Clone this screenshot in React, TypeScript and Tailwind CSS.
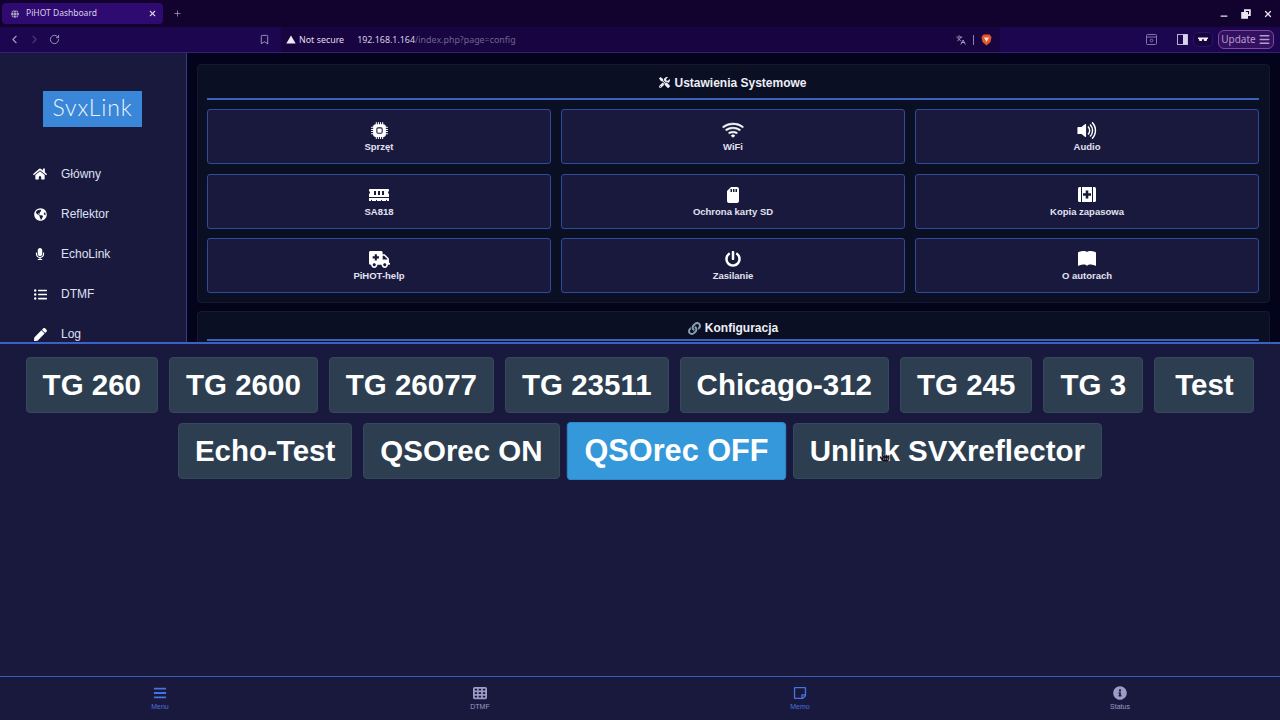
import type { ReactNode } from 'react';
import {
  FaHome,
  FaGlobeAmericas,
  FaMicrophone,
  FaListUl,
  FaPen,
  FaMemory,
  FaSdCard,
  FaAmbulance,
  FaPowerOff,
  FaTools,
  FaLink,
  FaBars,
  FaRegStickyNote,
  FaInfoCircle,
  FaGlobe,
  FaHandPointer,
} from 'react-icons/fa';
import { FaTableCells } from 'react-icons/fa6';
import { BsCpuFill, BsWifi, BsVolumeUpFill, BsBookFill } from 'react-icons/bs';
import { ChevronLeft, ChevronRight, RotateCw, Bookmark, Languages, X, Plus, Minus, Menu as MenuIcon } from 'lucide-react';

const navItems = [
  { label: 'Główny', icon: <FaHome size={14} /> },
  { label: 'Reflektor', icon: <FaGlobeAmericas size={13} /> },
  { label: 'EchoLink', icon: <FaMicrophone size={12} /> },
  { label: 'DTMF', icon: <FaListUl size={13} /> },
  { label: 'Log', icon: <FaPen size={13} /> },
];

// medkit without the handle, the FA one doesn't match
function BackupIcon() {
  return (
    <svg width="18" height="15" viewBox="0 0 18 15">
      <rect x="0" y="0" width="18" height="15" rx="1.5" fill="currentColor" />
      <rect x="3" y="0" width="1" height="15" fill="#19193e" />
      <rect x="14" y="0" width="1" height="15" fill="#19193e" />
      <path d="M7.7 3.5h2.6v2.7H13v2.6h-2.7v2.7H7.7V8.8H5V6.2h2.7Z" fill="#19193e" />
    </svg>
  );
}

const settings = [
  { label: 'Sprzęt', icon: <BsCpuFill size={17} /> },
  { label: 'WiFi', icon: <BsWifi size={22} className="stroke-current stroke-[0.5px]" /> },
  { label: 'Audio', icon: <BsVolumeUpFill size={23} /> },
  { label: 'SA818', icon: <FaMemory size={20} /> },
  { label: 'Ochrona karty SD', icon: <FaSdCard size={16} /> },
  { label: 'Kopia zapasowa', icon: <BackupIcon /> },
  { label: 'PiHOT-help', icon: <FaAmbulance size={21} /> },
  { label: 'Zasilanie', icon: <FaPowerOff size={16} /> },
  { label: 'O autorach', icon: <BsBookFill size={18} /> },
];

const firstRow = ['TG 260', 'TG 2600', 'TG 26077', 'TG 23511', 'Chicago-312', 'TG 245', 'TG 3', 'Test'];

function MacroButton({ children, active, cursor }: { children: ReactNode; active?: boolean; cursor?: boolean }) {
  return (
    <button
      className={
        active
          ? 'relative h-[56px] min-w-[100px] px-[16px] rounded-[4px] border border-[#2f86c4] bg-[#3498db] scale-[1.04] text-white text-[29.5px] font-bold whitespace-nowrap'
          : 'relative h-[56px] min-w-[100px] px-[16px] rounded-[4px] border border-[#34495e] bg-[#2c3e50] text-white text-[29.5px] font-bold whitespace-nowrap'
      }
    >
      {children}
      {cursor && (
        <FaHandPointer size={11} className="absolute left-[85px] top-[27px] text-[#10101c] stroke-[#8a93a0] stroke-[20px]" />
      )}
    </button>
  );
}

function BottomTab({ label, icon, active }: { label: string; icon: ReactNode; active?: boolean }) {
  return (
    <div className={active ? 'flex flex-col items-center justify-center gap-[2px] text-[#4a72dc]' : 'flex flex-col items-center justify-center gap-[2px] text-[#9c9cc6]'}>
      {icon}
      <span className="text-[7px] leading-[9px]">{label}</span>
    </div>
  );
}

export default function App() {
  return (
    <div className="w-[1280px] h-[720px] overflow-hidden flex flex-col bg-[#19193e] font-['Liberation_Sans',sans-serif]">
      {/* browser tab strip */}
      <div className="h-[27px] shrink-0 bg-[#12022e] flex items-center pl-[2px] pr-[7px] font-['Noto_Sans',sans-serif] text-[#d9d2ea]">
        <div className="w-[161px] h-[21px] rounded-[4px] bg-[#2f0a70] flex items-center pl-[9px] pr-[6px] text-[8.5px]">
          <FaGlobe size={8} className="text-[#a9a3c0] mr-[7px]" />
          <span className="flex-1">PiHOT Dashboard</span>
          <X size={9} strokeWidth={3} />
        </div>
        <Plus size={9} className="ml-[10px] text-[#a59dc2]" />
        <div className="ml-auto flex items-center gap-[12px] text-[#e8e4f2]">
          <Minus size={10} strokeWidth={3} className="translate-y-[2px]" />
          <svg width="10" height="10" viewBox="0 0 9 9" fill="none" stroke="currentColor" strokeWidth="1.6">
            <rect x="3.5" y="1" width="4.5" height="4.5" />
            <rect x="1" y="3.5" width="4.5" height="4.5" fill="currentColor" />
          </svg>
          <X size={10} strokeWidth={3} />
        </div>
      </div>

      {/* browser toolbar */}
      <div className="h-[26px] shrink-0 bg-[#1c0650] border-b border-[#35207a] flex items-center text-[#cfc8e4] font-['Noto_Sans',sans-serif]">
        <div className="w-[281px] shrink-0 pl-[8px] flex items-center">
          <ChevronLeft size={13} className="text-[#a59dc2]" />
          <ChevronRight size={13} className="ml-[7px] text-[#4a3a78]" />
          <RotateCw size={11} className="ml-[8px] text-[#a59dc2]" />
          <Bookmark size={11} className="ml-[199px] text-[#a59dc2]" />
        </div>
        <div className="w-[719px] shrink-0 h-[25px] bg-[#170440] flex items-center pl-[5px] pr-[8px] text-[8.9px]">
          <svg width="10" height="9" viewBox="0 0 10 9" className="mr-[3px]">
            <path d="M5 0.5 9.7 8.6H0.3Z" fill="#ece8f4" />
          </svg>
          <span className="text-[#e3deef]">Not secure</span>
          <span className="ml-[13px] text-[#d6d0e6]">192.168.1.164</span>
          <span className="text-[#6f6491]">/index.php?page=config</span>
          <Languages size={10} className="ml-auto mr-[-1px] text-[#b8b0cf]" />
          <span className="w-px h-[10px] bg-[#8b82a8] ml-[8px] mr-[7px]" />
          <svg width="11" height="12" viewBox="0 0 11 12">
            <path d="M2.5 0.5h6l2 2.5-1 5-4 3.5-4-3.5-1-5Z" fill="#e2572b" />
            <path d="M3 3.5h5L5.5 8Z" fill="#f6ddd0" />
          </svg>
        </div>
        <div className="flex-1 flex items-center justify-end pr-[6px]">
          <svg width="11" height="11" viewBox="0 0 11 11" fill="none" stroke="#7f74b0" strokeWidth="1" className="mr-[20px]">
            <rect x="0.5" y="0.5" width="10" height="10" rx="1" />
            <path d="M0.5 3h10" />
            <circle cx="5.5" cy="6.5" r="1.3" />
          </svg>
          <svg width="11" height="11" viewBox="0 0 11 11" className="mr-[5px]">
            <rect x="0.5" y="0.5" width="10" height="10" fill="none" stroke="#b8b0d8" />
            <rect x="6" y="0.5" width="4.5" height="10" fill="#d8d4ea" />
          </svg>
          <div className="w-[20px] h-[15px] rounded-[5px] border border-[#2b1465] bg-[#170440] flex items-center justify-center mr-[5px]">
            <svg width="10" height="5" viewBox="0 0 10 5">
              <path d="M0 0.5h10v1.2l-0.8 0.2-0.6 2.1H6.2L5.5 1.9h-1L3.8 4H1.4L0.8 1.9 0 1.7Z" fill="#f2f0f8" />
            </svg>
          </div>
          <div className="w-[56px] h-[19px] rounded-[6px] border border-[#7c4a9c] bg-[#341060] flex items-center justify-center gap-[2px] text-[10px] text-[#b89ad0]">
            Update
            <MenuIcon size={13} strokeWidth={2.5} />
          </div>
        </div>
      </div>

      {/* page behind the sheet */}
      <div className="h-[289px] shrink-0 flex overflow-hidden">
        <aside className="w-[187px] shrink-0 bg-[#19193e] border-r border-[#30407e] flex flex-col">
          <div className="mt-[38px] ml-[43px] w-[99px] h-[36px] bg-[#3a86d8] flex items-center justify-center pb-[3px] text-[#eaf4fb] text-[23px] font-light font-['Lato',sans-serif] tracking-[0.8px]">
            SvxLink
          </div>
          <nav className="mt-[39px] flex flex-col gap-[24px]">
            {navItems.map((item) => (
              <div key={item.label} className="h-[16px] flex items-center text-[#dfe0f2] text-[12px]">
                <span className="w-[14px] ml-[33px] flex justify-center text-white">{item.icon}</span>
                <span className="ml-[14px]">{item.label}</span>
              </div>
            ))}
          </nav>
        </aside>

        <main className="flex-1 bg-[#03031c] pt-[11px] pl-[10px] pr-[10px] flex flex-col gap-[8px]">
          <section className="shrink-0 h-[239px] rounded-[4px] border border-[#151a30] bg-[#0a0f24] pl-[9px] pr-[10px]">
            <h2 className="h-[35px] flex items-center justify-center gap-[4px] border-b-2 border-[#3a62b8] pt-[2px] text-[12px] font-bold text-[#eeeef6]">
              <FaTools size={11} />
              Ustawienia Systemowe
            </h2>
            <div className="mt-[9px] grid grid-cols-3 gap-x-[10px] gap-y-[9.5px]">
              {settings.map((item) => (
                <div
                  key={item.label}
                  className="h-[55px] rounded-[3px] border border-[#2f4b9a] bg-[#19193e] flex flex-col items-center text-white"
                >
                  <span className="h-[22px] mt-[9px] flex items-center justify-center">{item.icon}</span>
                  <span className="text-[9.5px] leading-[12px] font-bold text-[#e2e2f0]">{item.label}</span>
                </div>
              ))}
            </div>
          </section>
          <section className="shrink-0 h-[60px] rounded-[4px] border border-[#151a30] bg-[#0a0f24] pl-[9px] pr-[10px]">
            <h2 className="h-[29px] flex items-center justify-center gap-[4px] border-b-2 border-[#3a62b8] pt-[5px] text-[12px] font-bold text-[#eeeef6]">
              <FaLink size={13} className="text-[#8b9cb5]" />
              Konfiguracja
            </h2>
          </section>
        </main>
      </div>

      {/* macro sheet */}
      <div className="flex-1 bg-[#19193e] border-t-2 border-[#3a62c4] pt-[13px] px-[20px]">
        <div className="flex flex-wrap justify-center gap-x-[11px] gap-y-[10px]">
          {firstRow.map((label) => (
            <MacroButton key={label}>{label}</MacroButton>
          ))}
          <MacroButton>Echo-Test</MacroButton>
          <MacroButton>QSOrec ON</MacroButton>
          <MacroButton active>QSOrec OFF</MacroButton>
          <MacroButton cursor>Unlink SVXreflector</MacroButton>
        </div>
      </div>

      {/* bottom tab bar */}
      <div className="h-[44px] shrink-0 bg-[#19193e] border-t border-[#3a5cb8] grid grid-cols-4">
        <BottomTab active label="Menu" icon={<FaBars size={14} />} />
        <BottomTab label="DTMF" icon={<FaTableCells size={14} />} />
        <BottomTab active label="Memo" icon={<FaRegStickyNote size={14} />} />
        <BottomTab label="Status" icon={<FaInfoCircle size={14} />} />
      </div>
    </div>
  );
}
